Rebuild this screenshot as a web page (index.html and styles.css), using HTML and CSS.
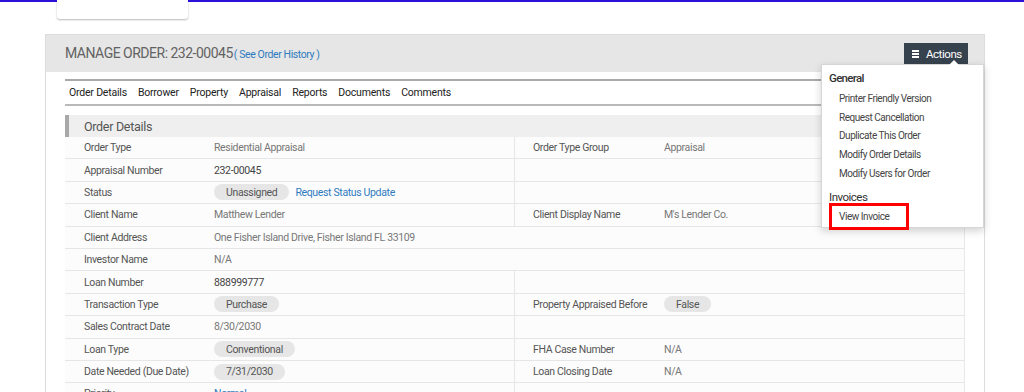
FILE: index.html
```html
<!DOCTYPE html>
<html>
<head>
<meta charset="utf-8">
<link rel="stylesheet" href="styles.css">
</head>
<body>
<div class="topbar"></div>
<div class="topcard"></div>
<div class="page">
  <div class="panel">
    <div class="panel-head">
      <div class="title">MANAGE ORDER: 232-00045<a class="history">( See Order History )</a></div>
      <button class="actions"><span class="burger"><i></i><i></i><i></i></span>Actions</button>
    </div>
    <div class="panel-body">
      <nav class="tabs">
        <a>Order Details</a><a>Borrower</a><a>Property</a><a>Appraisal</a><a>Reports</a><a>Documents</a><a>Comments</a>
      </nav>
      <div class="section">
        <div class="section-title">Order Details</div>
        <div class="grid">
          <div class="row"><div class="lbl">Order Type</div><div class="val">Residential Appraisal</div><div class="lbl r">Order Type Group</div><div class="val">Appraisal</div></div>
          <div class="row"><div class="lbl">Appraisal Number</div><div class="val strong">232-00045</div><div class="lbl r"></div><div class="val"></div></div>
          <div class="row"><div class="lbl">Status</div><div class="val"><span class="pill">Unassigned</span><a class="link">Request Status Update</a></div><div class="lbl r"></div><div class="val"></div></div>
          <div class="row"><div class="lbl">Client Name</div><div class="val">Matthew Lender</div><div class="lbl r">Client Display Name</div><div class="val">M's Lender Co.</div></div>
          <div class="row"><div class="lbl">Client Address</div><div class="val span">One Fisher Island Drive, Fisher Island FL 33109</div></div>
          <div class="row"><div class="lbl">Investor Name</div><div class="val span">N/A</div></div>
          <div class="row"><div class="lbl">Loan Number</div><div class="val strong">888999777</div><div class="lbl r"></div><div class="val"></div></div>
          <div class="row"><div class="lbl">Transaction Type</div><div class="val"><span class="pill">Purchase</span></div><div class="lbl r">Property Appraised Before</div><div class="val"><span class="pill">False</span></div></div>
          <div class="row"><div class="lbl">Sales Contract Date</div><div class="val">8/30/2030</div><div class="lbl r"></div><div class="val"></div></div>
          <div class="row"><div class="lbl">Loan Type</div><div class="val"><span class="pill">Conventional</span></div><div class="lbl r">FHA Case Number</div><div class="val">N/A</div></div>
          <div class="row"><div class="lbl">Date Needed (Due Date)</div><div class="val"><span class="pill">7/31/2030</span></div><div class="lbl r">Loan Closing Date</div><div class="val">N/A</div></div>
          <div class="row"><div class="lbl">Priority</div><div class="val link">Normal</div><div class="lbl r"></div><div class="val"></div></div>
        </div>
      </div>
    </div>
    <div class="menu">
      <div class="menu-group">General</div>
      <a class="menu-item">Printer Friendly Version</a>
      <a class="menu-item">Request Cancellation</a>
      <a class="menu-item">Duplicate This Order</a>
      <a class="menu-item">Modify Order Details</a>
      <a class="menu-item">Modify Users for Order</a>
      <div class="menu-group inv">Invoices</div>
      <a class="menu-item hl">View Invoice</a>
    </div>
  </div>
</div>
</body>
</html>
```
FILE: styles.css
```css
* { box-sizing: border-box; }
html, body { margin: 0; padding: 0; background: #fff; overflow: hidden; }
body {
  font-family: Roboto, "Liberation Sans", sans-serif;
  font-size: 10.5px;
  letter-spacing: -0.35px;
  color: #555;
  height: 392px;
  position: relative;
}
.topbar { height: 2px; background: #2a10d8; }
.topcard {
  position: absolute;
  left: 57px; top: 0;
  width: 131px; height: 19px;
  background: #fff;
  border-radius: 0 0 3px 3px;
  box-shadow: 0 1px 2px rgba(0,0,0,0.28);
}
.page { padding: 32px 39px 0 45px; }
.panel {
  position: relative;
  width: 940px;
  border: 1px solid #dcdcdc;
  border-bottom: none;
  height: 400px;
}
.panel-head {
  height: 37px;
  background: #e6e6e6;
  display: flex;
  align-items: center;
  justify-content: space-between;
  padding: 0 16px 0 19px;
}
.title { font-size: 14px; color: #626262; letter-spacing: -0.5px; margin-top: -1px; }
.history { font-size: 10.5px; color: #2f7bbf; margin-left: 1px; letter-spacing: -0.4px; }
.actions {
  margin-top: 1px;
  height: 22px;
  width: 64px;
  background: #36424d;
  color: #fff;
  border: 0;
  font-family: inherit;
  font-size: 11.5px;
  letter-spacing: -0.45px;
  display: flex;
  align-items: center;
  padding: 0 0 0 8px;
  gap: 7px;
}
.burger { display: flex; flex-direction: column; gap: 1.5px; width: 7px; }
.burger i { display: block; height: 1.5px; background: #fff; }
.panel-body { padding: 7px 19px 0 19px; }
.tabs {
  border-top: 2px solid #a9a9a9;
  border-bottom: 2px solid #b9b9b9;
  height: 27px;
  display: flex;
  align-items: center;
  gap: 11px;
  padding-left: 4px;
  color: #222;
  letter-spacing: -0.2px;
}
.section { margin-top: 9px; border-right: 1px solid #e9e9e9; }
.section-title {
  height: 22px;
  background: #efefef;
  border-left: 4px solid #a8a8a8;
  padding-left: 15px;
  font-size: 12.5px;
  letter-spacing: -0.3px;
  color: #555;
  display: flex;
  align-items: center;
}
.grid { display: flex; flex-direction: column; }
.row {
  display: grid;
  grid-template-columns: 149px 300px 150px 1fr;
  height: 22.4px;
  flex-shrink: 0;
  background: #fcfcfc;
  border-bottom: 1px solid #e6e6e6;
  align-items: stretch;
}
.lbl { padding-left: 19px; display: flex; align-items: center; color: #555; }
.lbl.r { border-left: 1px solid #e6e6e6; padding-left: 18px; }
.val { display: flex; align-items: center; color: #777; }
.val.span { grid-column: 2 / 5; }
.val.strong { color: #444; }
.pill {
  background: #e6e6e6;
  border-radius: 9px;
  height: 16px;
  padding: 0 12px;
  display: inline-flex;
  align-items: center;
  color: #555;
}
.link { color: #2f7bbf; margin-left: 6px; }
.val.link { margin-left: 0; }
.menu {
  position: absolute;
  top: 29px;
  right: 0;
  width: 163px;
  height: 164px;
  background: #fff;
  border: 1px solid #d6d6d6;
  box-shadow: 0 3px 8px rgba(0,0,0,0.18);
  padding: 4px 0 0 7px;
  display: flex;
  flex-direction: column;
}
.menu::before {
  content: "";
  position: absolute;
  top: -5px; right: 24px;
  border-left: 5px solid transparent;
  border-right: 5px solid transparent;
  border-bottom: 5px solid #fff;
}
.menu-group { flex-shrink: 0; font-size: 11.5px; letter-spacing: -0.7px; color: #333; font-weight: 500; height: 18px; display: flex; align-items: center; margin-bottom: 2px; }
.menu-group.inv { font-weight: 400; letter-spacing: -0.5px; margin-top: 5px; margin-bottom: -3px; }
.menu-item { flex-shrink: 0; height: 18.8px; display: flex; align-items: center; padding-left: 10px; color: #444; font-size: 10px; letter-spacing: -0.45px; }
.menu-item.hl {
  width: 80px;
  height: 27px;
  border: 3px solid #f00;
  padding-left: 7px;
}
```
